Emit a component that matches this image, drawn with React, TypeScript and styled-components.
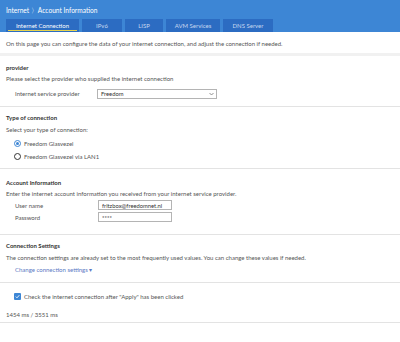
import React from "react";
import styled, { createGlobalStyle } from "styled-components";

const Global = createGlobalStyle`
  html, body { margin: 0; padding: 0; background: #ffffff; }
  body { font-family: Lato, "Liberation Sans", sans-serif; font-size: 6px; color: #555; }
  * { box-sizing: border-box; }
`;

const Page = styled.div`
  width: 400px;
  height: 342px;
  background: #fff;
  overflow: hidden;
`;

const Header = styled.header`
  background: #3d86d5;
  height: 32px;
  padding: 6px 6px 0;
  display: flex;
  flex-direction: column;
  justify-content: space-between;
`;

const Crumb = styled.div`
  color: #fff;
  font-size: 6.6px;
  line-height: 8px;
`;

const Tabs = styled.nav`
  display: flex;
  gap: 3px;
`;

const Tab = styled.div<{ $w: number; $active?: boolean }>`
  width: ${(p) => p.$w}px;
  height: 13px;
  background: #2c6cc2;
  color: ${(p) => (p.$active ? "#fff" : "#c6d8f0")};
  font-size: 6px;
  line-height: 13px;
  text-align: center;
  position: relative;
  &::after {
    content: "";
    display: ${(p) => (p.$active ? "block" : "none")};
    position: absolute;
    left: 2px;
    right: 2px;
    bottom: 1px;
    height: 1px;
    background: #e6d34d;
  }
`;

const Intro = styled.p`
  margin: 0;
  padding: 8px 6px 5px;
  line-height: 8px;
  border-bottom: 3px solid #f1f1f1;
`;

const Section = styled.section<{ $pt: number; $pb: number }>`
  padding: ${(p) => p.$pt}px 6px ${(p) => p.$pb}px;
  border-bottom: 1px solid #e3e3e3;
`;

const Title = styled.h3<{ $mb?: number }>`
  margin: 0 0 ${(p) => p.$mb ?? 3}px;
  font-size: 6px;
  line-height: 8px;
  font-weight: 700;
  color: #333;
`;

const Desc = styled.p<{ $mb?: number }>`
  margin: 0 0 ${(p) => p.$mb ?? 4}px;
  line-height: 8px;
`;

const FieldRow = styled.div<{ $h?: number }>`
  display: flex;
  align-items: center;
  height: ${(p) => p.$h ?? 13}px;
  padding-left: 9px;
`;

const Label = styled.span<{ $w: number }>`
  width: ${(p) => p.$w}px;
  flex: none;
  color: #555;
`;

const Select = styled.div`
  width: 120px;
  height: 10px;
  border: 1px solid #b4b4b4;
  display: flex;
  align-items: center;
  justify-content: space-between;
  padding: 0 2px 0 3px;
  color: #333;
  font-size: 5.8px;
`;

const Input = styled.div`
  width: 74px;
  height: 10px;
  border: 1px solid #b4b4b4;
  display: flex;
  align-items: center;
  padding: 0 3px;
  color: #333;
  font-size: 5.8px;
`;

const OptionRow = styled.label`
  display: flex;
  align-items: center;
  gap: 3px;
  height: 13px;
  padding-left: 8px;
`;

const Radio = styled.span<{ $on?: boolean }>`
  width: 7px;
  height: 7px;
  border-radius: 50%;
  flex: none;
  border: 1px solid ${(p) => (p.$on ? "#3d86d5" : "#333")};
  display: flex;
  align-items: center;
  justify-content: center;
  &::after {
    content: "";
    display: ${(p) => (p.$on ? "block" : "none")};
    width: 3px;
    height: 3px;
    border-radius: 50%;
    background: #3d86d5;
  }
`;

const Check = styled.span`
  width: 7px;
  height: 7px;
  flex: none;
  background: #3d86d5;
  border-radius: 1px;
  display: flex;
  align-items: center;
  justify-content: center;
`;

const Link = styled.a`
  display: block;
  padding-left: 9px;
  color: #5a79c4;
  line-height: 8px;
  text-decoration: none;
`;

const Timing = styled.div`
  line-height: 8px;
  margin-top: 8px;
`;

const ChevronDown = () => (
  <svg width="5" height="4" viewBox="0 0 5 4">
    <path d="M0.5 1 L2.5 3 L4.5 1" fill="none" stroke="#777" strokeWidth="0.8" />
  </svg>
);

export default function App() {
  return (
    <Page>
      <Global />
      <Header>
        <Crumb>Internet 〉Account Information</Crumb>
        <Tabs>
          <Tab $w={73} $active>Internet Connection</Tab>
          <Tab $w={40}>IPv6</Tab>
          <Tab $w={38}>LISP</Tab>
          <Tab $w={54}>AVM Services</Tab>
          <Tab $w={50}>DNS Server</Tab>
        </Tabs>
      </Header>
      <Intro>
        On this page you can configure the data of your internet connection, and adjust the connection if needed.
      </Intro>
      <Section $pt={8} $pb={6}>
        <Title>provider</Title>
        <Desc>Please select the provider who supplied the internet connection</Desc>
        <FieldRow>
          <Label $w={82}>Internet service provider</Label>
          <Select>
            <span>Freedom</span>
            <ChevronDown />
          </Select>
        </FieldRow>
      </Section>
      <Section $pt={7} $pb={5}>
        <Title $mb={4}>Type of connection</Title>
        <Desc $mb={3}>Select your type of connection:</Desc>
        <OptionRow>
          <Radio $on />
          Freedom Glasvezel
        </OptionRow>
        <OptionRow>
          <Radio />
          Freedom Glasvezel via LAN1
        </OptionRow>
      </Section>
      <Section $pt={10} $pb={11}>
        <Title>Account Information</Title>
        <Desc $mb={1}>Enter the internet account information you received from your internet service provider.</Desc>
        <FieldRow $h={12}>
          <Label $w={83}>User name</Label>
          <Input>fritzbox@freedomnet.nl</Input>
        </FieldRow>
        <FieldRow $h={12}>
          <Label $w={83}>Password</Label>
          <Input>****</Input>
        </FieldRow>
      </Section>
      <Section $pt={7} $pb={8}>
        <Title $mb={4}>Connection Settings</Title>
        <Desc $mb={4}>The connection settings are already set to the most frequently used values. You can change these values if needed.</Desc>
        <Link>Change connection settings ▾</Link>
      </Section>
      <Section $pt={7} $pb={3}>
        <OptionRow>
          <Check>
            <svg width="5" height="5" viewBox="0 0 5 5">
              <path d="M0.8 2.6 L2 3.8 L4.3 1.2" fill="none" stroke="#fff" strokeWidth="0.9" />
            </svg>
          </Check>
          Check the internet connection after "Apply" has been clicked
        </OptionRow>
        <Timing>1454 ms / 3551 ms</Timing>
      </Section>
    </Page>
  );
}
